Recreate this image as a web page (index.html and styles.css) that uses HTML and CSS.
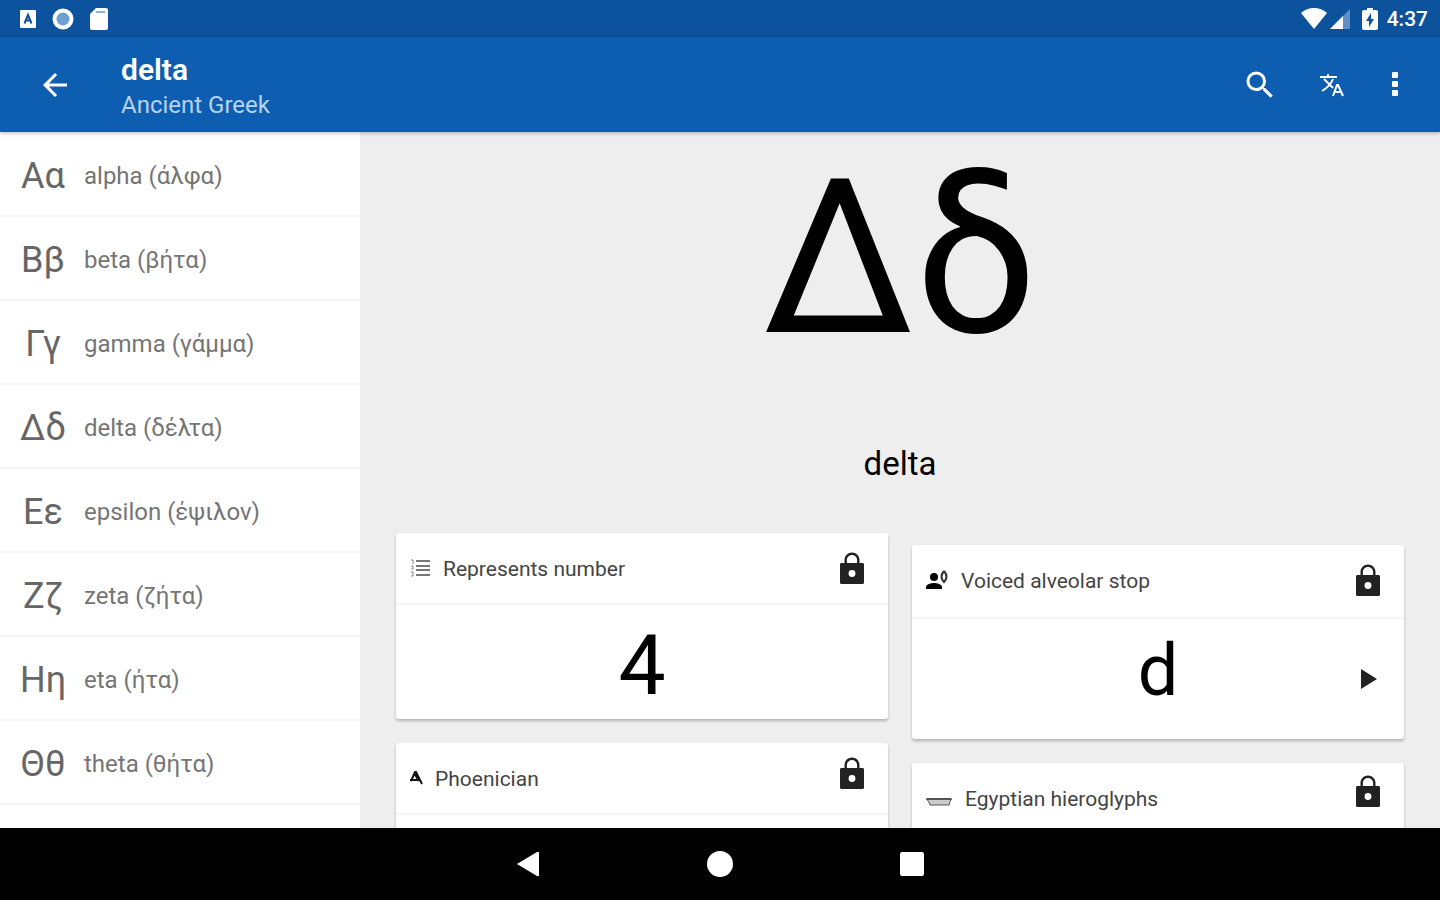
FILE: index.html
```
<!DOCTYPE html>
<html lang="en">
<head>
    <meta charset="UTF-8">
    <meta name="viewport" content="width=device-width, initial-scale=1">
    <title>delta - Ancient Greek</title>
    <link rel="stylesheet" href="styles.css">
</head>
<body>
<svg class="sprite" aria-hidden="true">
    <symbol id="lock" viewBox="0 0 24 24">
        <path fill-rule="evenodd" d="M19 8h-2V6c0-2.760-2.240-5-5-5S7 3.240 7 6v2H5c-.6 0-1 .4-1 1v12c0 .6.4 1 1 1h14c.6 0 1-.4 1-1V9c0-.6-.4-1-1-1zm-7 9.300a2.300 2.300 0 1 1 0-4.600 2.300 2.300 0 0 1 0 4.600zM15.400 8H8.600V6c0-1.900 1.500-3.400 3.400-3.400s3.400 1.500 3.400 3.400v2z"/>
    </symbol>
</svg>

<div class="status-bar">
    <div class="status-icons status-left">
        <svg width="18" height="20" viewBox="0 0 18 20">
            <rect x="1" y="1" width="16" height="18" rx="1" fill="#fff"/>
            <path d="M5.500 14.500 9 6l3.500 8.500M7 11.500h4" fill="none" stroke="#0c529c" stroke-width="2"/>
        </svg>
        <svg width="24" height="24" viewBox="0 0 24 24">
            <circle cx="12" cy="12" r="8.500" fill="#6fa0d2" stroke="#fff" stroke-width="4"/>
        </svg>
        <svg width="20" height="24" viewBox="0 0 20 24">
            <path d="M7 1h10a2 2 0 0 1 2 2v18a2 2 0 0 1-2 2H3a2 2 0 0 1-2-2V7z" fill="#fff"/>
            <path d="M7 5h9" stroke="#8fb2d8" stroke-width="2"/>
        </svg>
    </div>
    <div class="status-icons">
        <svg width="28" height="24" viewBox="0 0 28 24">
            <path d="M13 22 0 6C4 2.500 8 1 13 1s9 1.500 13 5z" fill="#fff"/>
        </svg>
        <svg width="22" height="22" viewBox="0 0 22 22">
            <path d="M21 1v20H1z" fill="#5f8fc4"/>
            <path d="M14 8v13H1z" fill="#fff"/>
        </svg>
        <svg class="battery" width="18" height="24" viewBox="0 0 18 24">
            <path d="M6 1h6v2h3a2 2 0 0 1 2 2v16a2 2 0 0 1-2 2H3a2 2 0 0 1-2-2V5a2 2 0 0 1 2-2h3z" fill="#fff"/>
            <path d="M10 6 5 14h3v6l5-8h-3z" fill="#0c529c"/>
        </svg>
        <span class="clock">4:37</span>
    </div>
</div>

<header class="toolbar">
    <button class="icon-button back" aria-label="Back">
        <svg width="36" height="36" viewBox="0 0 24 24"><path d="M20 11H7.830l5.590-5.590L12 4l-8 8 8 8 1.410-1.410L7.830 13H20z"/></svg>
    </button>
    <div class="titles">
        <h1>delta</h1>
        <p>Ancient Greek</p>
    </div>
    <div class="actions">
        <button class="icon-button" aria-label="Search">
            <svg width="36" height="36" viewBox="0 0 24 24"><path d="M15.500 14h-.79l-.28-.27A6.470 6.470 0 0 0 16 9.500 6.500 6.500 0 1 0 9.500 16c1.610 0 3.090-.59 4.230-1.570l.27.28v.79l5 4.990L20.490 19zm-6 0C7.010 14 5 11.990 5 9.500S7.010 5 9.500 5 14 7.010 14 9.500 11.990 14 9.500 14z"/></svg>
        </button>
        <button class="icon-button" aria-label="Translate">
            <svg width="26" height="26" viewBox="0 0 26 26">
                <path d="M1 5h17M9 2v3M5 7l9 9M14 7C12 12 8 16 3 19" fill="none" stroke="#fff" stroke-width="2"/>
                <path d="M14 24l4-11h1l5 11M16 20h6" fill="none" stroke="#fff" stroke-width="2"/>
            </svg>
        </button>
        <button class="icon-button more" aria-label="More options">
            <svg width="36" height="36" viewBox="0 0 36 36">
                <rect x="15" y="5" width="6" height="6" rx="1"/>
                <rect x="15" y="14" width="6" height="6" rx="1"/>
                <rect x="15" y="23" width="6" height="6" rx="1"/>
            </svg>
        </button>
    </div>
</header>

<div class="content">
    <nav class="letters">
        <a href="#alpha"><span class="glyph">Αα</span>alpha (άλφα)</a>
        <a href="#beta"><span class="glyph">Ββ</span>beta (βήτα)</a>
        <a href="#gamma"><span class="glyph">Γγ</span>gamma (γάμμα)</a>
        <a href="#delta"><span class="glyph">Δδ</span>delta (δέλτα)</a>
        <a href="#epsilon"><span class="glyph">Εε</span>epsilon (έψιλον)</a>
        <a href="#zeta"><span class="glyph">Ζζ</span>zeta (ζήτα)</a>
        <a href="#eta"><span class="glyph">Ηη</span>eta (ήτα)</a>
        <a href="#theta"><span class="glyph">Θθ</span>theta (θήτα)</a>
    </nav>

    <main class="detail">
        <div class="big-letter">Δδ</div>
        <h2>delta</h2>
        <div class="cards">
            <div class="column">
                <section class="card">
                    <div class="card-header">
                        <svg width="22" height="20" viewBox="0 0 22 20">
                            <path d="M7 2h14M7 7h14M7 11h14M7 16h14" stroke="#777" stroke-width="2"/>
                            <path d="M2 1h2v4M2 7h2v3H2M2 13h2v4H2" fill="none" stroke="#888"/>
                        </svg>
                        <h3>Represents number</h3>
                        <svg class="lock" width="36" height="36"><use href="#lock"/></svg>
                    </div>
                    <div class="card-body number">4</div>
                </section>
                <section class="card">
                    <div class="card-header raised">
                        <svg width="14" height="18" viewBox="0 0 14 18">
                            <path d="M1 10h8M2 11 6 2h1l6 12M5 3l5 8" fill="none" stroke="#111" stroke-width="2"/>
                        </svg>
                        <h3>Phoenician</h3>
                        <svg class="lock" width="36" height="36"><use href="#lock"/></svg>
                    </div>
                    <div class="card-body"></div>
                </section>
            </div>
            <div class="column shifted">
                <section class="card">
                    <div class="card-header">
                        <svg width="24" height="24" viewBox="0 0 24 24">
                            <circle cx="9" cy="8" r="4"/>
                            <path d="M9 14c-2.670 0-8 1.340-8 4v2h16v-2c0-2.660-5.330-4-8-4z"/>
                            <path d="M19 2q-5 6 0 11 5-5 0-11" fill="none" stroke="#333" stroke-width="2"/>
                        </svg>
                        <h3>Voiced alveolar stop</h3>
                        <svg class="lock" width="36" height="36"><use href="#lock"/></svg>
                    </div>
                    <div class="card-body sound">
                        <span>d</span>
                        <button class="play" aria-label="Play sound">
                            <svg width="16" height="22" viewBox="0 0 16 22"><path d="M0 1v20l16-10z"/></svg>
                        </button>
                    </div>
                </section>
                <section class="card">
                    <div class="card-header raised">
                        <svg width="28" height="16" viewBox="0 0 28 16">
                            <path d="M1 8h26c-2 1-2 3-3 6H5C4 11 3 9 1 8z" fill="#ccc" stroke="#555"/>
                            <path d="M2 8h24" stroke="#555" stroke-width="2"/>
                        </svg>
                        <h3>Egyptian hieroglyphs</h3>
                        <svg class="lock" width="36" height="36"><use href="#lock"/></svg>
                    </div>
                    <div class="card-body"></div>
                </section>
            </div>
        </div>
    </main>
</div>

<footer class="nav-bar">
    <button aria-label="Back"><svg width="26" height="28" viewBox="0 0 26 28"><path d="M2 14 22 2q2-1 2 1v22q0 2-2 1z"/></svg></button>
    <button aria-label="Home"><svg width="26" height="28" viewBox="0 0 26 28"><circle cx="13" cy="14" r="13"/></svg></button>
    <button aria-label="Recent apps"><svg width="26" height="28" viewBox="0 0 26 28"><rect x="1" y="2" width="24" height="24" rx="2"/></svg></button>
</footer>
</body>
</html>
```
FILE: styles.css
```
* {
    box-sizing: border-box;
}

body {
    margin: 0;
    height: 100vh;
    display: flex;
    flex-direction: column;
    overflow: hidden;
    background: #eee;
    color: #000;
    font-family: Roboto, "Noto Sans", sans-serif;
}

h1, h2, h3, p {
    margin: 0;
    font-weight: 400;
}

button {
    display: flex;
    align-items: center;
    justify-content: center;
    padding: 0;
    border: none;
    background: none;
    cursor: pointer;
}

svg {
    flex: none;
}

.sprite {
    display: none;
}

.status-bar {
    flex: none;
    display: flex;
    justify-content: space-between;
    height: 37px;
    padding: 0 12px 0 19px;
    background: #0c529c;
    color: #fff;
}

.status-icons {
    display: flex;
    align-items: center;
}

.status-left {
    gap: 14px;
}

.battery {
    margin: 0 8px 0 10px;
}

.clock {
    font-size: 21px;
    font-weight: 500;
}

.toolbar {
    flex: none;
    display: flex;
    align-items: center;
    height: 95px;
    padding: 0 27px 0 37px;
    background: #0d5eb0;
    color: #fff;
    box-shadow: 0 1px 4px rgba(0, 0, 0, 0.3);
    z-index: 1;
}

.icon-button {
    width: 36px;
    height: 36px;
    fill: #fff;
}

.titles {
    flex: 1;
    padding: 4px 0 0 48px;
}

.titles h1 {
    font-size: 30px;
    line-height: 36px;
    font-weight: 600;
}

.titles p {
    font-size: 24px;
    line-height: 34px;
    color: #b9d2ed;
}

.actions {
    display: flex;
    gap: 36px;
}

.actions .more {
    margin-left: -9px;
}

.content {
    flex: 1;
    min-height: 0;
    display: flex;
}

.letters {
    width: 25%;
    padding-top: 1px;
    overflow: hidden;
    background: #fff;
}

.letters a {
    display: flex;
    align-items: center;
    height: 84px;
    padding: 4px 0 0 19px;
    border-bottom: 2px solid #f4f4f4;
    color: #757575;
    font-size: 24px;
    text-decoration: none;
}

.glyph {
    width: 48px;
    margin-right: 17px;
    color: #666;
    font-size: 36px;
    text-align: center;
}

.detail {
    flex: 1;
    overflow: hidden;
    padding: 0 36px;
    text-align: center;
}

.big-letter {
    font-size: 216px;
    line-height: 254px;
    padding-bottom: 56px;
}

.detail h2 {
    font-size: 33px;
    line-height: 44px;
}

.cards {
    display: flex;
    gap: 24px;
    padding-top: 47px;
}

.column {
    flex: 1;
    display: flex;
    flex-direction: column;
    gap: 24px;
}

.shifted {
    padding-top: 12px;
}

.card {
    background: #fff;
    border-radius: 3px;
    box-shadow: 0 2px 3px rgba(0, 0, 0, 0.25);
}

.card-header {
    display: flex;
    align-items: center;
    gap: 12px;
    height: 72px;
    padding: 2px 18px 0 13px;
    border-bottom: 2px solid #f6f6f6;
}

.shifted .card-header {
    height: 74px;
    padding-top: 0;
}

.card-header h3 {
    flex: 1;
    color: #444;
    font-size: 21px;
    text-align: left;
}

.lock {
    fill: #222;
}

.raised .lock {
    align-self: flex-start;
    margin-top: 11px;
}

.card-body {
    min-height: 114px;
    font-size: 72px;
}

.number {
    padding-top: 8px;
    font-size: 84px;
    line-height: 106px;
}

.sound {
    display: grid;
    grid-template-columns: 1fr auto 1fr;
    align-items: center;
    min-height: 120px;
}

.sound span {
    grid-column: 2;
    padding-bottom: 17px;
    line-height: 96px;
}

.play {
    justify-self: end;
    width: 36px;
    height: 36px;
    margin-right: 17px;
    fill: #222;
}

.nav-bar {
    flex: none;
    display: flex;
    align-items: center;
    justify-content: center;
    gap: 166px;
    height: 72px;
    background: #000;
}

.nav-bar button {
    fill: #fff;
}
```
